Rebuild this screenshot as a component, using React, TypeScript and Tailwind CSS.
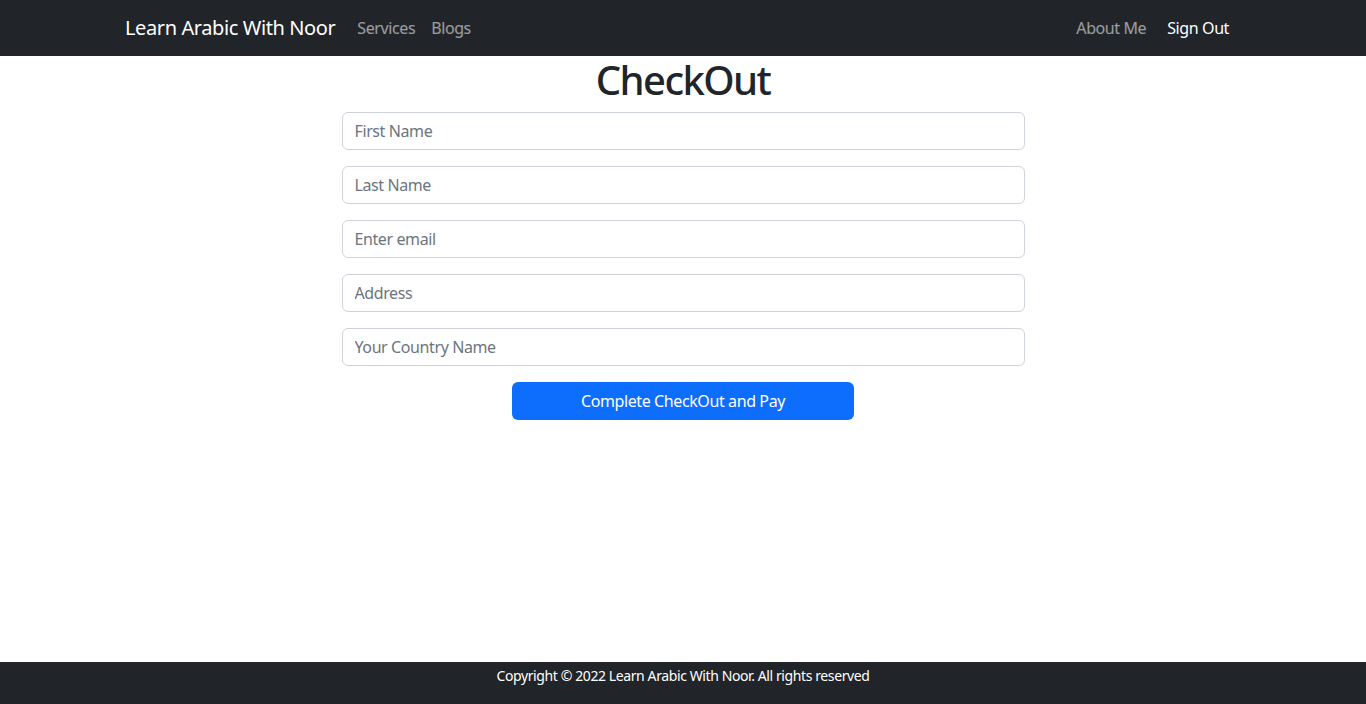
import { useState } from "react";

const fields = [
  { name: "firstName", placeholder: "First Name", type: "text" },
  { name: "lastName", placeholder: "Last Name", type: "text" },
  { name: "email", placeholder: "Enter email", type: "email" },
  { name: "address", placeholder: "Address", type: "text" },
  { name: "country", placeholder: "Your Country Name", type: "text" },
];

const Header = () => (
  <nav className="h-14 bg-[#212529]">
    <div className="mx-auto flex h-full max-w-[1140px] items-center justify-between px-3">
      <div className="flex items-center">
        <a href="#" className="mr-[14px] py-[5px] text-[20px] text-white">
          Learn Arabic With Noor
        </a>
        <a href="#" className="px-2 py-2 text-base text-white/55 hover:text-white/75">
          Services
        </a>
        <a href="#" className="px-2 py-2 text-base text-white/55 hover:text-white/75">
          Blogs
        </a>
      </div>
      <div className="flex items-center pr-[4px]">
        <a href="#" className="px-2 py-2 text-base text-white/55 hover:text-white/75">
          About Me
        </a>
        <a href="#" className="ml-[5px] px-2 py-2 text-base text-white">
          Sign Out
        </a>
      </div>
    </div>
  </nav>
);

const Footer = () => (
  <footer className="h-[42px] bg-[#212529] pt-[4px] text-center text-sm text-white">
    <p>Copyright © 2022 Learn Arabic With Noor. All rights reserved</p>
  </footer>
);

const App = () => {
  const [values, setValues] = useState<Record<string, string>>({});

  const handleChange = (name: string, value: string) => {
    setValues(prev => ({ ...prev, [name]: value }));
  };

  return (
    <div
      className="flex min-h-screen flex-col tracking-[-0.025em] text-[#212529]"
      style={{ fontFamily: '"Noto Sans", "Open Sans", sans-serif' }}
    >
      <Header />
      <main className="flex-1">
        <div className="mx-auto w-1/2">
          <h1 className="mb-2 text-center text-[40px] leading-[1.2] font-medium tracking-[-0.04em]">CheckOut</h1>
          <form onSubmit={e => e.preventDefault()}>
            {fields.map(field => (
              <div key={field.name} className="mb-4">
                <input
                  type={field.type}
                  placeholder={field.placeholder}
                  value={values[field.name] || ""}
                  onChange={e => handleChange(field.name, e.target.value)}
                  className="block h-[38px] w-full rounded-md border border-[#ced4da] px-3 text-base text-[#212529] placeholder:text-[#6c757d] focus:border-[#86b7fe] focus:outline-none"
                />
              </div>
            ))}
            <button
              type="submit"
              className="mx-auto block h-[38px] w-1/2 rounded-md bg-[#0d6efd] text-base text-white hover:bg-[#0b5ed7]"
            >
              Complete CheckOut and Pay
            </button>
          </form>
        </div>
      </main>
      <Footer />
    </div>
  );
};

export default App;
